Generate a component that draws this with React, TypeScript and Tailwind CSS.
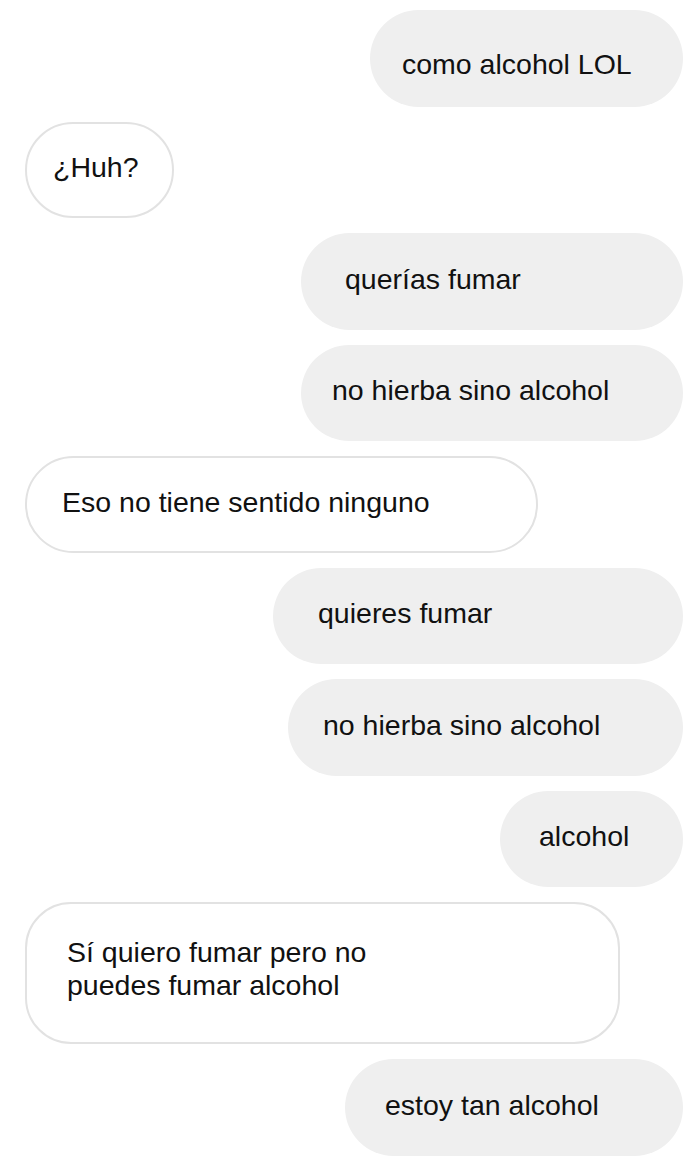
import React from 'react';

type Msg = {
  text: string[];
  mine: boolean;
  w: string;
  pl: string;
  extra?: string;
};

// bubble widths and text insets are read off the screenshot
const messages: Msg[] = [
  { text: ['como alcohol LOL'], mine: true, w: 'w-[313px]', pl: 'pl-[32px]', extra: 'pt-[12px]' },
  { text: ['¿Huh?'], mine: false, w: 'w-[149px]', pl: 'pl-[26px]', extra: 'pb-[4px]' },
  { text: ['querías fumar'], mine: true, w: 'w-[382px]', pl: 'pl-[44px]', extra: 'pb-[4px]' },
  { text: ['no hierba sino alcohol'], mine: true, w: 'w-[382px]', pl: 'pl-[31px]', extra: 'pb-[4px]' },
  { text: ['Eso no tiene sentido ninguno'], mine: false, w: 'w-[513px]', pl: 'pl-[35px]', extra: 'pb-[4px]' },
  { text: ['quieres fumar'], mine: true, w: 'w-[410px]', pl: 'pl-[45px]', extra: 'pb-[4px]' },
  { text: ['no hierba sino alcohol'], mine: true, w: 'w-[395px]', pl: 'pl-[35px]', extra: 'pb-[4px]' },
  { text: ['alcohol'], mine: true, w: 'w-[183px]', pl: 'pl-[39px]', extra: 'pb-[4px]' },
  { text: ['Sí quiero fumar pero no', 'puedes fumar alcohol'], mine: false, w: 'w-[595px]', pl: 'pl-[40px]', extra: 'pb-[8px]' },
  { text: ['estoy tan alcohol'], mine: true, w: 'w-[338px]', pl: 'pl-[40px]', extra: 'pb-[4px]' },
];

const Bubble = ({ m }: { m: Msg }) => {
  const multi = m.text.length > 1;
  return (
    <div
      className={[
        'flex flex-col justify-center text-[28.5px] leading-[33px] text-[#111111]',
        m.w,
        m.pl,
        m.extra ?? '',
        multi ? 'h-[142px] rounded-[46px]' : 'h-[96.5px] rounded-full',
        m.mine
          ? 'self-end mr-[17px] bg-[#efefef]'
          : 'self-start ml-[25px] bg-white border-2 border-[#e2e2e2]',
      ].join(' ')}
    >
      {m.text.map((line, i) => (
        <span key={i} className="whitespace-nowrap">
          {line}
        </span>
      ))}
    </div>
  );
};

export default function App() {
  return (
    <div
      className="min-h-screen w-[700px] bg-white pt-[10px] flex flex-col gap-[15px]"
      style={{ fontFamily: '"Liberation Sans", Arial, sans-serif' }}
    >
      {messages.map((m, i) => (
        <Bubble key={i} m={m} />
      ))}
    </div>
  );
}
